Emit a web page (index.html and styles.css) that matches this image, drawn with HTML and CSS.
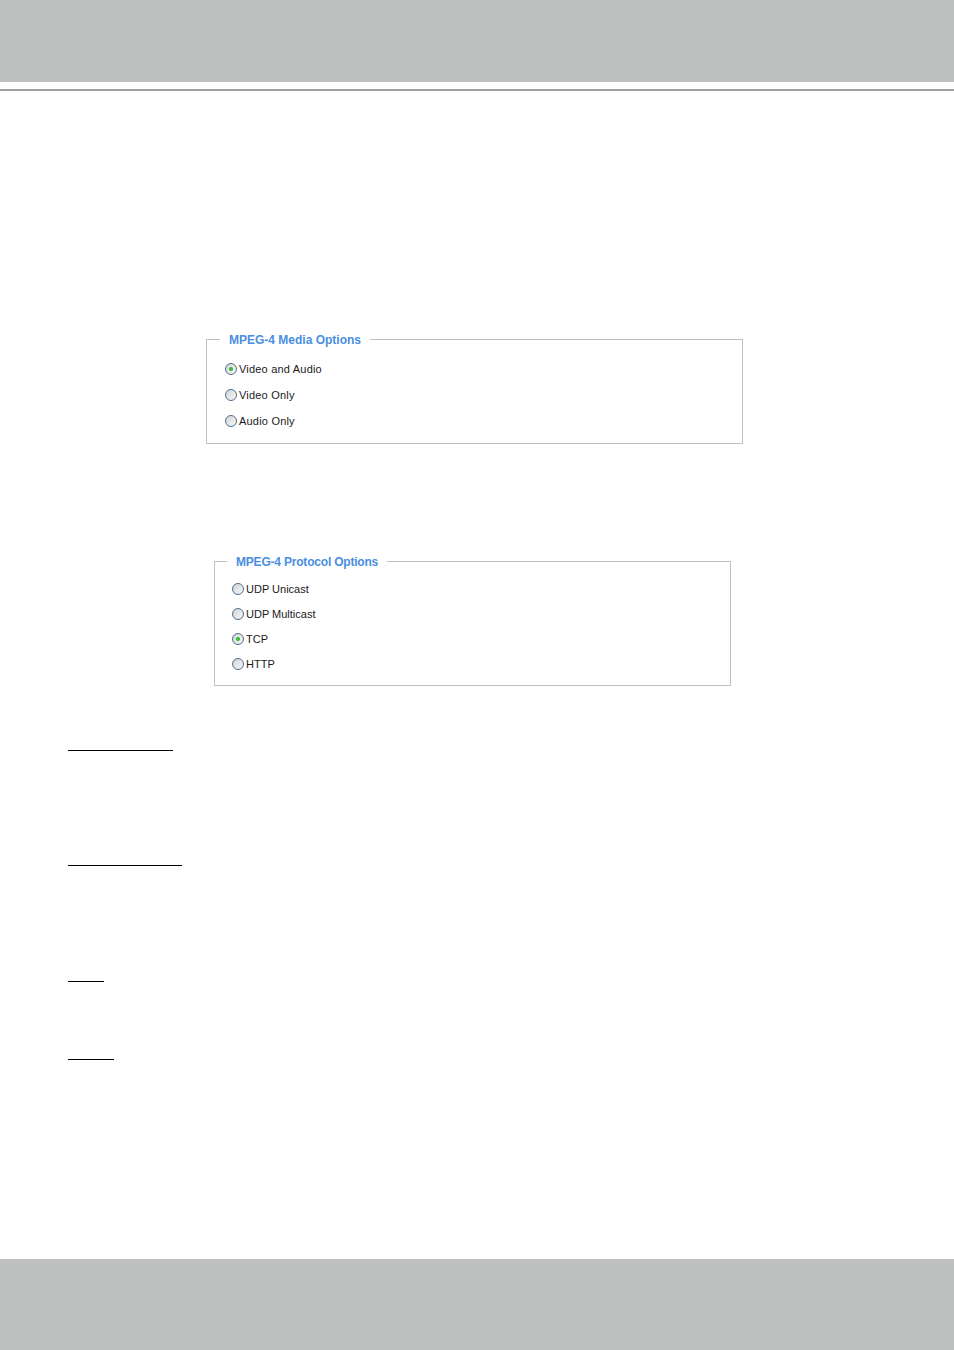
FILE: index.html
```html
<!DOCTYPE html>
<html lang="en">
<head>
    <meta charset="UTF-8">
    <meta name="viewport" content="width=device-width, initial-scale=1.0">
    <title>MPEG-4 Options</title>
    <link rel="stylesheet" href="styles.css">
</head>
<body>

    <header class="top-band"></header>
    <div class="top-rule"></div>

    <main class="page">
        <fieldset class="options options-media">
            <legend>MPEG-4 Media Options</legend>
            <label class="opt"><input type="radio" name="media" checked>Video and Audio</label>
            <label class="opt"><input type="radio" name="media">Video Only</label>
            <label class="opt"><input type="radio" name="media">Audio Only</label>
        </fieldset>

        <fieldset class="options options-protocol">
            <legend>MPEG-4 Protocol Options</legend>
            <label class="opt"><input type="radio" name="protocol">UDP Unicast</label>
            <label class="opt"><input type="radio" name="protocol">UDP Multicast</label>
            <label class="opt"><input type="radio" name="protocol" checked>TCP</label>
            <label class="opt"><input type="radio" name="protocol">HTTP</label>
        </fieldset>

        <div class="term term-unicast"></div>
        <div class="term term-multicast"></div>
        <div class="term term-tcp"></div>
        <div class="term term-http"></div>
    </main>

    <footer class="bottom-band"></footer>

</body>
</html>
```

FILE: styles.css
```css
/* Page frame */
body {
    margin: 0;
    background-color: #ffffff;
    font-family: 'Liberation Sans', Arial, sans-serif;
    color: #1a1a1a;
}

.top-band {
    height: 82px;
    background-color: #bfc1c0;
}

.top-rule {
    height: 2px;
    margin-top: 7px;
    background-color: #a0a0a0;
}

.page {
    height: 1168px;
    box-sizing: border-box;
    padding-top: 241px;
}

.bottom-band {
    height: 91px;
    background-color: #bfc1c0;
}

/* Option boxes */
.options {
    margin: 0;
    padding: 0;
    border: 1px solid #c4c0b8;
    box-sizing: border-box;
}

.options legend {
    font-size: 12px;
    line-height: 12px;
    font-weight: bold;
    color: #4a8ee0;
    padding: 2px 9px 0;
    margin-left: -5px;
}

.options-media {
    margin-left: 206px;
    width: 537px;
    padding: 10px 0 9px 18px;
}

.options-media .opt {
    height: 26px;
    letter-spacing: 0.2px;
}

.options-protocol {
    margin-top: 110px;
    margin-left: 214px;
    width: 517px;
    padding: 8px 0 9px 17px;
}

.options-protocol legend {
    letter-spacing: -0.2px;
}

.options-protocol .opt {
    height: 25px;
}

.opt {
    display: flex;
    align-items: center;
    font-size: 11px;
}

/* Radio buttons */
.opt input {
    appearance: none;
    -webkit-appearance: none;
    width: 12px;
    height: 12px;
    margin: 0 2px 0 0;
    border: 1px solid #4e6e8e;
    border-radius: 50%;
    box-sizing: border-box;
    background: linear-gradient(135deg, #d2d4d6, #f7f7f7);
}

.opt input:checked {
    background:
        radial-gradient(circle, #3fbf3f 0 1.6px, transparent 2.4px),
        linear-gradient(135deg, #d2d4d6, #f7f7f7);
}

/* Underlined terms */
.term {
    margin-left: 68px;
    border-bottom: 1px solid #000000;
}

.term-unicast {
    width: 105px;
    margin-top: 64px;
}

.term-multicast {
    width: 114px;
    margin-top: 114px;
}

.term-tcp {
    width: 36px;
    margin-top: 115px;
}

.term-http {
    width: 46px;
    margin-top: 77px;
}
```
